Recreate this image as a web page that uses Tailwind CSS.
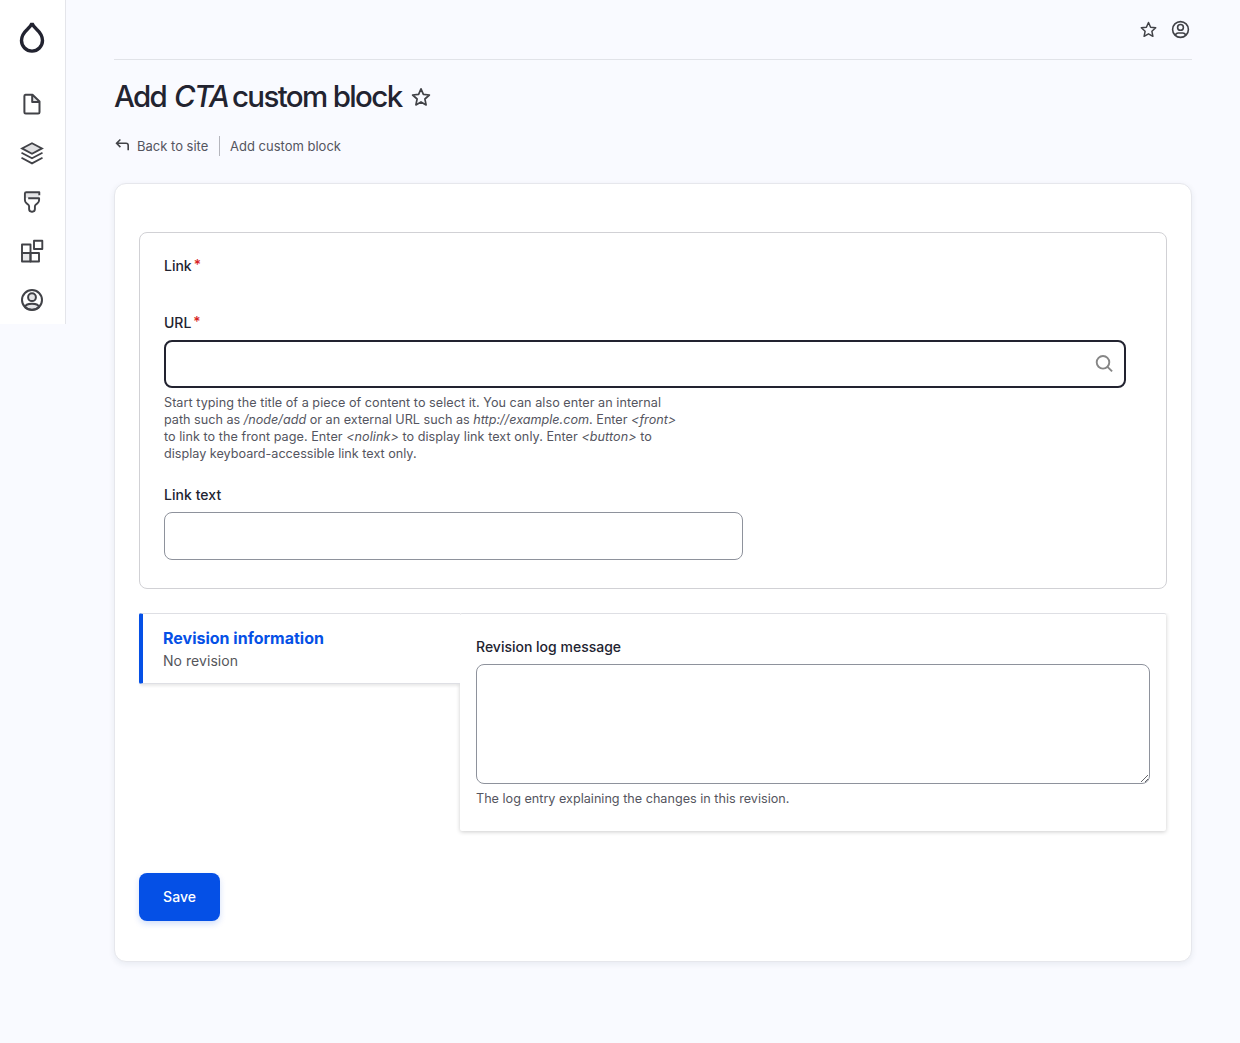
<!DOCTYPE html>
<html lang="en">
<head>
<meta charset="utf-8">
<title>Add CTA custom block</title>
<script src="https://cdn.jsdelivr.net/npm/@tailwindcss/browser@4"></script>
</head>
<body class="flex h-[1043px] items-start overflow-hidden bg-[#f9faff] font-['Inter',sans-serif] text-[#222330]">
<aside class="flex h-[324px] w-[66px] shrink-0 flex-col items-center border-r border-[#e4e5ea] bg-white pr-px text-[#414247]">
  <a class="mt-5 h-[34px]" href="#" aria-label="Home">
    <svg class="h-[34px] w-[26px]" viewBox="0 0 26 34" fill="none" stroke="#222330" stroke-width="3.400" stroke-linejoin="bevel"><path d="M13 3.200C12.200 5.600 10.600 7.200 8.200 9.400 5 12.300 2.500 15.800 2.500 20.600a10.500 10.500 0 0 0 21 0c0-4.800-2.500-8.300-5.700-11.200C15.400 7.200 13.800 5.600 13 3.200Z"/></svg>
  </a>
  <nav class="mt-[38px] flex flex-col gap-[25px]">
    <svg class="size-6" viewBox="0 0 24 24" fill="none" stroke="currentColor" stroke-width="2" stroke-linejoin="round"><path d="M12 3v7h7z" fill="#e4e4e6" stroke="none"/><path d="M5.500 2.800h7L19.500 9.500v10.700a1.300 1.300 0 0 1-1.300 1.300H5.700a1.300 1.300 0 0 1-1.300-1.300V4.100a1.300 1.300 0 0 1 1.300-1.300ZM12.200 2.800V10h7.200"/></svg>
    <svg class="size-6" viewBox="0 0 24 24" fill="none" stroke="currentColor" stroke-width="1.800"><path d="M12 2.200 22 7.400 12 12.700 2 7.400Z" fill="#e0e0e2"/><path d="m1.500 11.800 10.500 5.500 10.500-5.500M1.500 16.800 12 22.400l10.500-5.600"/></svg>
    <svg class="size-6" viewBox="0 0 24 24" fill="none" stroke="currentColor" stroke-width="1.900" stroke-linejoin="round"><path d="M5 2h14v6H5z" fill="#e4e4e6" stroke="none"/><path d="M19.300 5.300V2.200H6.300A1.400 1.400 0 0 0 4.900 3.600v6.300c0 1.500.5 2.400 1.600 3.300l1.500 1.200c.8.700 1.100 1.300 1.100 2.200v2.500c0 1.500 1 2.600 2.600 2.600h.6c1.600 0 2.600-1.100 2.600-2.600v-2.500c0-.9.300-1.500 1.100-2.200l1.500-1.200c1.100-.9 1.600-1.800 1.600-3.300V8.200H8.200"/></svg>
    <svg class="size-6" viewBox="0 0 24 24" fill="none" stroke="currentColor" stroke-width="1.900" stroke-linejoin="round"><path d="M2 14h8.500v8.500H2z" fill="#e8e8ea"/><path d="M2 5.500h8.500V14H2zM10.500 14H19v8.500h-8.500zM14 1.700h8.300V10H14z"/></svg>
    <svg class="size-6" viewBox="0 0 24 24" fill="none" stroke="currentColor" stroke-width="2"><circle cx="12" cy="9.200" r="3.900" fill="#e4e4e6"/><path d="M5 19.300c.3-2.400 3-3.600 7-3.600s6.700 1.200 7 3.600c-4 3.400-10 3.400-14 0" fill="#e4e4e6"/><circle cx="12" cy="12" r="10"/></svg>
  </nav>
</aside>
<div class="ml-12 w-[1078px]">
  <header class="flex h-[60px] items-center justify-end gap-3.5 border-b border-[#e1e3e8] pr-0.5 pb-px text-[#414247]">
    <svg class="size-[18px]" viewBox="0.500 -0.500 18 18" fill="none" stroke="currentColor" stroke-width="1.500" stroke-linejoin="round"><path d="m9 2 2.100 4.700 5.100.6-3.800 3.500 1 5L9 13.300l-4.400 2.500 1-5-3.800-3.500 5.100-.6Z"/></svg>
    <svg class="size-[18px] overflow-visible" viewBox="0.500 -0.500 18 18" fill="none" stroke="currentColor" stroke-width="1.600"><circle cx="9" cy="9" r="7.900"/><circle cx="9" cy="6.900" r="2.900"/><path d="M4 14.700c.3-1.500 1.500-2.200 2.700-2.200h4.600c1.200 0 2.400.7 2.700 2.200"/></svg>
  </header>
  <div class="mt-[17px] flex h-10 items-center">
    <h1 class="w-[297px] pb-0.5 text-[29.500px] leading-[38px] font-medium tracking-[-1.650px] whitespace-nowrap">Add <em class="mr-[-2.500px] ml-[1.500px]">CTA</em> custom block</h1>
    <svg class="size-5" viewBox="0 0 20 20" fill="none" stroke="#414247" stroke-width="1.700" stroke-linejoin="round"><path d="m10 1.800 2.400 5.500 6 .7-4.500 4 1.200 5.900-5.100-3-5.100 3L6.100 12 1.600 8l6-.7Z"/></svg>
  </div>
  <nav class="mt-[18px] flex h-[22px] items-center text-[13px] leading-5 text-[#545560]">
    <svg class="mr-[7px] size-4 shrink-0" viewBox="0 0 16 16" fill="none" stroke="#414247" stroke-width="1.600"><path d="M6.400 1.500 2.600 5.300l3.800 3.800M2.900 5.300H12a2.200 2.200 0 0 1 2.200 2.200v4.800"/></svg>
    <a class="w-[82px] whitespace-nowrap" href="#">Back to site</a>
    <span class="h-5 border-l border-[#b5b6bd]"></span>
    <span class="ml-2.5 whitespace-nowrap">Add custom block</span>
  </nav>
  <main class="mt-[26px] h-[779px] rounded-xl border border-[#e6e7ec] bg-white px-6 pt-12 shadow-[0_2px_6px_rgba(20,45,82,0.08)]">
    <fieldset class="h-[357px] rounded-lg border border-[#d1d1d5] px-6 pt-[23px]">
      <div class="text-sm leading-5 font-medium">Link<span class="relative -top-px ml-0.5 text-[#d72222]">*</span></div>
      <div class="mt-[37px] text-sm leading-5 font-medium">URL<span class="relative -top-px ml-0.5 text-[#d72222]">*</span></div>
      <div class="mt-[7px] flex h-12 w-[962px] items-center justify-end rounded-lg border-2 border-[#222330] pr-2.5">
        <svg class="size-5" viewBox="0 0 20 20" fill="none" stroke="#868686" stroke-width="1.900"><circle cx="9" cy="8.300" r="6.300"/><path d="m13.500 12.800 4.600 4.600"/></svg>
      </div>
      <p class="mt-1.5 text-[12.640px] leading-[17px] whitespace-nowrap text-[#545560]"><span class="tracking-[0.040px]">Start typing the title of a piece of content to select it. You can also enter an internal</span><br>path such as <em>/node/add</em> or an external URL such as <em>http://example.com</em>. Enter <em>&lt;front&gt;</em><br><span class="tracking-[0.045px]">to link to the front page. Enter <em>&lt;nolink&gt;</em> to display link text only. Enter <em>&lt;button&gt;</em> to</span><br>display keyboard-accessible link text only.</p>
      <div class="mt-[23px] text-sm leading-5 font-medium tracking-[0.050px]">Link text</div>
      <div class="mt-[7px] h-12 w-[579px] rounded-lg border border-[#8e929c]"></div>
    </fieldset>
    <section class="mt-6 flex h-[218px] items-start">
      <div class="z-10 h-[71px] w-[321px] rounded-l-xs border-t border-b border-l-4 border-t-[#dedfe4] border-b-[#dedfe4] border-l-[#0550e6] bg-white pt-3 pl-5 shadow-[0_3px_3px_-1px_rgba(0,0,0,0.09)]">
        <div class="text-base leading-6 font-bold text-[#0550e6]">Revision information</div>
        <div class="text-sm leading-[22px] tracking-[0.050px] text-[#55565b]">No revision</div>
      </div>
      <div class="relative z-20 h-full w-[706px] rounded-xs border-t border-[#dedfe4] bg-white px-4 pt-[23px] shadow-[0_1px_4px_rgba(0,0,0,0.2)] [clip-path:polygon(0_0,720px_0,720px_230px,-6px_230px,-6px_71px,0_71px)]">
        <div class="text-sm leading-5 font-medium">Revision log message</div>
        <div class="relative mt-[7px] h-[120px] w-[674px] rounded-lg border border-[#8e929c]">
          <svg class="absolute right-0 bottom-0 size-2.5" viewBox="0 0 10 10" stroke="#55565b" stroke-width=".9"><path d="m2 9 7-7M6 9l3-3"/></svg>
        </div>
        <p class="mt-1.5 text-[12.640px] leading-[17px] whitespace-nowrap text-[#545560]">The log entry explaining the changes in this revision.</p>
      </div>
    </section>
    <button class="mt-[42px] block h-12 w-[81px] rounded-lg bg-[#0550e6] text-sm font-medium text-white shadow-[0_3px_6px_rgba(5,80,230,0.18)]">Save</button>
  </main>
</div>
</body>
</html>
